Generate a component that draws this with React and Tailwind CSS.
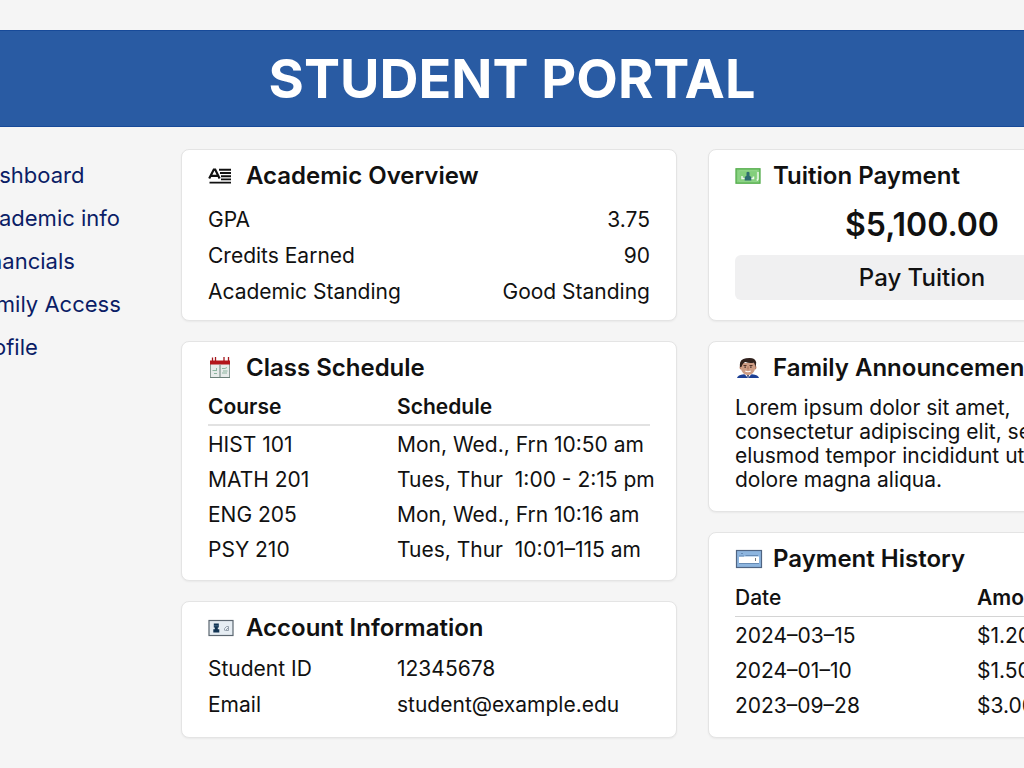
const navLinks = ["Dashboard", "Academic info", "Financials", "Family Access", "Profile"];

const overview = [
  ["GPA", "3.75"],
  ["Credits Earned", "90"],
  ["Academic Standing", "Good Standing"],
];

const classes = [
  ["HIST 101", "Mon, Wed., Frn 10:50 am"],
  ["MATH 201", "Tues, Thur  1:00 - 2:15 pm"],
  ["ENG 205", "Mon, Wed., Frn 10:16 am"],
  ["PSY 210", "Tues, Thur  10:01–115 am"],
];

const account = [
  ["Student ID", "12345678"],
  ["Email", "student@example.edu"],
];

const payments = [
  ["2024–03–15", "$1.200"],
  ["2024–01–10", "$1.500"],
  ["2023–09–28", "$3.000"],
];

function OverviewIcon() {
  return (
    <svg aria-hidden="true" width="24" height="20" viewBox="0 0 24 20" className="shrink-0">
      <path d="M1.2 12.6 5.8 3.6h1.4l4.4 9M3.2 9.8h6.6" fill="none" stroke="#111" strokeWidth="2.2" />
      <path d="M11 3.8h12M12 7h11M13 10.2h10M13 13.4h10M1.5 16.6H23" stroke="#111" strokeWidth="1.9" />
    </svg>
  );
}

function CalendarIcon() {
  return (
    <svg aria-hidden="true" width="24" height="24" viewBox="0 0 24 24" className="shrink-0">
      <rect x="2.5" y="6" width="19" height="15.5" fill="#e7ebea" stroke="#8b9c97" />
      <rect x="2" y="4.5" width="20" height="4" fill="#b3141b" />
      <path d="M4.5 1.5v4M7.5 1v4M16 1v4M20.5 1v4" stroke="#a5181e" strokeWidth="1.3" />
      <path d="M12 8.5v13" stroke="#7f938c" strokeWidth="1.2" />
      <path d="M4.5 14.5h4M6 17.5h3M8.5 12v3M14 12.5h3l2-1M14 17h5M15 15h4.5" fill="none" stroke="#8db5a0" />
      <path d="M2 21.5h20" stroke="#6b8079" />
    </svg>
  );
}

function IdCardIcon() {
  return (
    <svg aria-hidden="true" width="26" height="18" viewBox="0 0 26 18" className="shrink-0">
      <rect x="1" y="1.5" width="24" height="15" fill="#e6edf3" stroke="#5b6670" strokeWidth="1.2" />
      <path d="M5.8 4.5h5v4h-1v1.8h1.5v3.2h-6v-3.2h1.5V8.5h-1z" fill="#123453" />
      <path d="M6 6.8h4.6" stroke="#5a7f9e" strokeWidth=".7" />
      <path d="M16.5 11.5v-2l2-2h2v4h-3l3-3" fill="none" stroke="#8c99a5" strokeWidth=".9" />
    </svg>
  );
}

function CashIcon() {
  return (
    <svg aria-hidden="true" width="26" height="18" viewBox="0 0 26 18" className="shrink-0">
      <rect x="1" y="1.8" width="24" height="14.4" fill="#83cf7c" stroke="#55ad4d" strokeWidth="1.3" />
      <path d="M4 3.8h18v10.4H4z" fill="none" stroke="#98d890" strokeWidth=".8" />
      <path d="M7 9v2.500h3.500M15.500 11.500h3V9.500M22 13.500l1-1.500V5" fill="none" stroke="#eef9ec" strokeWidth="1.5" />
      <path d="M11.5 5.5q1.5-1.5 3 0v3.2l1.8 1.3v3.5H9.7V10l1.8-1.3z" fill="#2e6b70" />
    </svg>
  );
}

function ManIcon() {
  return (
    <svg aria-hidden="true" width="26" height="22" viewBox="0 0 26 22" className="shrink-0">
      <path d="M2 21q.5-3 7-3.8h8q6.5.8 7 3.8z" fill="#1d3f94" />
      <path d="m9 16.5 4 4.5 4-4.5z" fill="#fff" />
      <path d="m12 18.5 1 2.500 1-2.500-1-.8z" fill="#15275c" />
      <ellipse cx="5.8" cy="10.500" rx="1.2" ry="2" fill="#b98068" />
      <ellipse cx="20.2" cy="10.500" rx="1.2" ry="2" fill="#b98068" />
      <path d="M6 6h14v6q-1 5.500-7 6.200Q7 17.500 6 12z" fill="#cd9c84" />
      <path d="M5 10Q3.800 2 11 1.300q9-1.600 10.200 4l-.4 4.700-1.800-4.300q-5 1-8.500-.6Q8 5.500 6.400 10z" fill="#30211d" />
      <path d="M8.500 8.500h3M14.500 8.500h3" stroke="#553429" />
      <path d="M9.500 10.200h1.300M15.200 10.200h1.300" stroke="#291b19" strokeWidth="1.200" />
      <path d="M10.300 14q2.700 1.500 5.400 0" fill="none" stroke="#fff" strokeWidth="1.200" />
      <path d="M13 9.500v3" stroke="#a8705a" />
    </svg>
  );
}

function CheckIcon() {
  return (
    <svg aria-hidden="true" width="28" height="20" viewBox="0 0 28 20" className="shrink-0">
      <rect x="1.500" y="1.500" width="25" height="17" fill="#8db5df" stroke="#4f6482" strokeWidth="1.200" />
      <rect x="4" y="7.500" width="20" height="7" fill="#fff" />
      <path d="M4 7h5M10.500 6.500H23M6 4.500h2M4 14.500h20" stroke="#668bb5" />
      <path d="M20.500 9v3" stroke="#777" />
    </svg>
  );
}

function Card({ icon, title, children }) {
  return (
    <section className="rounded-lg border border-[#e4e4e4] bg-white px-[26px] pt-3 shadow-xs">
      <h2 className="flex h-7 items-center whitespace-nowrap text-2xl font-semibold">
        <span className="flex w-[38px] shrink-0">{icon}</span>
        {title}
      </h2>
      {children}
    </section>
  );
}

export default function App() {
  return (
    <div className="min-h-screen overflow-x-hidden bg-[#f5f5f5] py-[30px] font-['Inter','Liberation_Sans',sans-serif] text-[21px] leading-7 text-[#111]">
      <header className="flex h-[97px] items-center justify-center border-y border-[#174a99] bg-[#295ba3]">
        <h1 className="whitespace-nowrap text-[54px] font-bold text-white">STUDENT PORTAL</h1>
      </header>

      <div className="-mx-32 flex pt-[22px] pr-4">
        <nav aria-label="Main" className="w-[309px] shrink-0 pt-1 pl-[99px]">
          <ul>
            {navLinks.map((label) => (
              <li key={label}>
                <a href="#" className="flex h-[43px] items-center whitespace-nowrap text-[22px] text-[#0b1d66]">
                  {label}
                </a>
              </li>
            ))}
          </ul>
        </nav>

        <main className="grid min-w-0 flex-1 grid-cols-[496fr_428fr] items-start gap-x-[31px]">
          <div className="flex min-w-0 flex-col gap-5">
            <Card icon={<OverviewIcon />} title="Academic Overview">
              <dl className="mt-3 pb-[10px]">
                {overview.map(([label, value]) => (
                  <div key={label} className="flex h-9 items-center justify-between">
                    <dt>{label}</dt>
                    <dd>{value}</dd>
                  </div>
                ))}
              </dl>
            </Card>

            <Card icon={<CalendarIcon />} title="Class Schedule">
              <div className="pt-[7px] pb-[15px]">
                <table className="w-full table-fixed border-collapse text-left">
                  <thead>
                    <tr className="h-9 border-b-2 border-[#e2e2e2]">
                      <th className="w-[189px] p-0 font-semibold">Course</th>
                      <th className="p-0 font-semibold">Schedule</th>
                    </tr>
                  </thead>
                  <tbody>
                    {classes.map(([course, time]) => (
                      <tr key={course} className="h-[35px]">
                        <td className="p-0 pt-1">{course}</td>
                        <td className="whitespace-pre p-0 pt-1">{time}</td>
                      </tr>
                    ))}
                  </tbody>
                </table>
              </div>
            </Card>

            <Card icon={<IdCardIcon />} title="Account Information">
              <dl className="mt-[9px] pb-[14px]">
                {account.map(([label, value]) => (
                  <div key={label} className="flex h-9 items-center">
                    <dt className="w-[189px] shrink-0">{label}</dt>
                    <dd>{value}</dd>
                  </div>
                ))}
              </dl>
            </Card>
          </div>

          <div className="flex min-w-0 flex-col gap-5">
            <Card icon={<CashIcon />} title="Tuition Payment">
              <div className="pt-[17px] pb-5">
                <p className="text-center text-[32px] leading-9 font-semibold">$5,100.00</p>
                <button type="button" className="mt-3 h-[45px] w-full rounded-md bg-[#f0f0f1] text-2xl font-medium">
                  Pay Tuition
                </button>
              </div>
            </Card>

            <Card icon={<ManIcon />} title="Family Announcements">
              <p className="pt-[14px] pb-[19px] leading-6 whitespace-nowrap">
                Lorem ipsum dolor sit amet,
                <br />
                consectetur adipiscing elit, sed do
                <br />
                elusmod tempor incididunt ut labore
                <br />
                dolore magna aliqua.
              </p>
            </Card>

            <Card icon={<CheckIcon />} title="Payment History">
              <div className="pt-[7px] pb-4">
                <table className="w-full table-fixed border-collapse text-left">
                  <thead>
                    <tr className="h-9 border-b border-[#d4d4d4]">
                      <th className="w-[242px] p-0 font-medium">Date</th>
                      <th className="p-0 font-semibold">Amount</th>
                    </tr>
                  </thead>
                  <tbody>
                    {payments.map(([date, amount]) => (
                      <tr key={date} className="h-[35px]">
                        <td className="p-0 pt-1">{date}</td>
                        <td className="p-0 pt-1">{amount}</td>
                      </tr>
                    ))}
                  </tbody>
                </table>
              </div>
            </Card>
          </div>
        </main>
      </div>
    </div>
  );
}
